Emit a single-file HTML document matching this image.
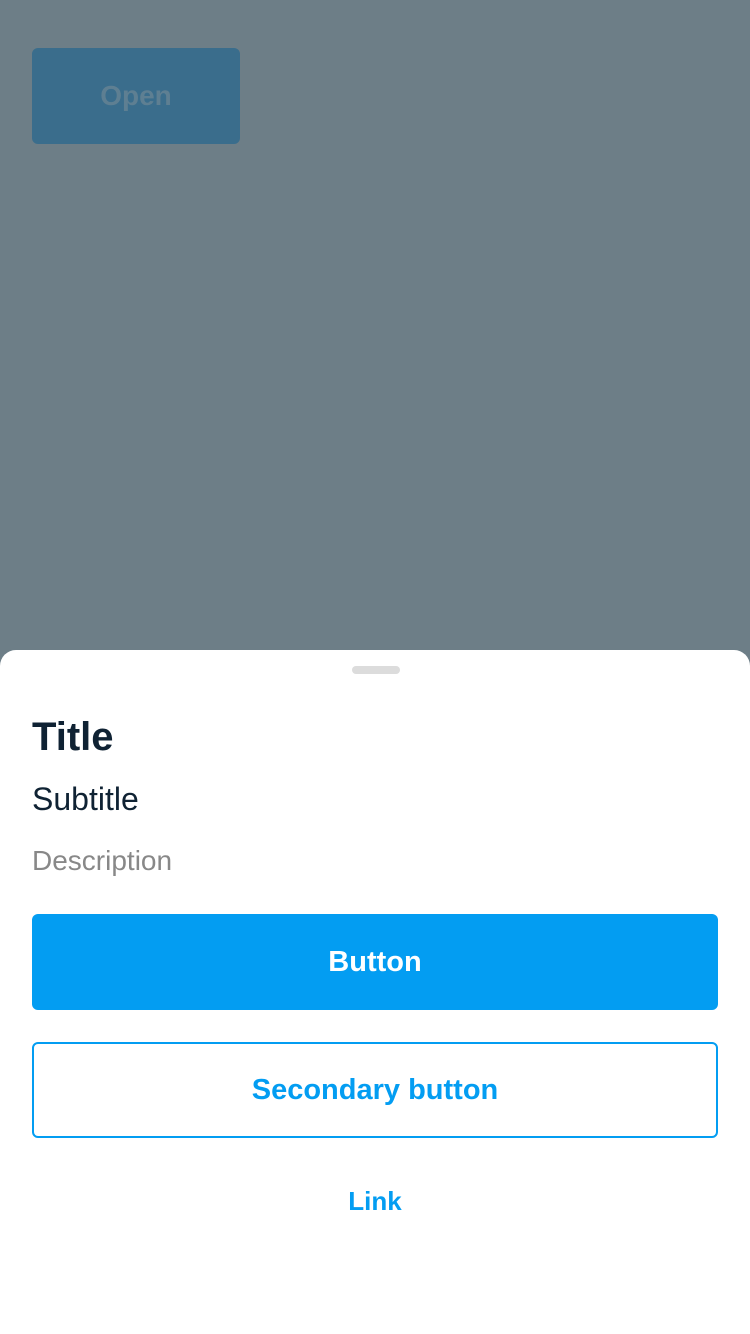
<!DOCTYPE html>
<html><head><meta charset="utf-8"><style>
*{margin:0;padding:0;box-sizing:border-box}
body{width:750px;height:1334px;position:relative;background:#6d7e87;font-family:"Liberation Sans",sans-serif;overflow:hidden}
.open{position:absolute;left:32px;top:48px;width:208px;height:96px;background:#3a6d8c;border-radius:6px;color:#5e7f92;font-size:28px;font-weight:bold;display:flex;align-items:center;justify-content:center}
.sheet{position:absolute;left:0;top:650px;width:750px;height:684px;background:#fff;border-radius:16px 16px 0 0}
.handle{position:absolute;left:352px;top:16px;width:48px;height:8px;border-radius:4px;background:#dcdcdc}
.t{position:absolute;left:32px;top:65px;font-size:40px;font-weight:bold;color:#0f2233}
.s{position:absolute;left:32px;top:131px;font-size:32px;color:#0f2233}
.d{position:absolute;left:32px;top:195px;font-size:28px;color:#888}
.b1{position:absolute;left:32px;top:264px;width:686px;height:96px;background:#039df2;border-radius:6px;color:#fff;font-size:29px;font-weight:bold;display:flex;align-items:center;justify-content:center}
.b2{position:absolute;left:32px;top:392px;width:686px;height:96px;border:2px solid #039df2;border-radius:6px;color:#039df2;font-size:29px;font-weight:bold;display:flex;align-items:center;justify-content:center}
.l{position:absolute;left:0;width:750px;top:536px;text-align:center;color:#039df2;font-size:26px;font-weight:bold}
</style></head><body>
<div class="open">Open</div>
<div class="sheet">
<div class="handle"></div>
<div class="t">Title</div>
<div class="s">Subtitle</div>
<div class="d">Description</div>
<div class="b1">Button</div>
<div class="b2">Secondary button</div>
<div class="l">Link</div>
</div>
</body></html>
